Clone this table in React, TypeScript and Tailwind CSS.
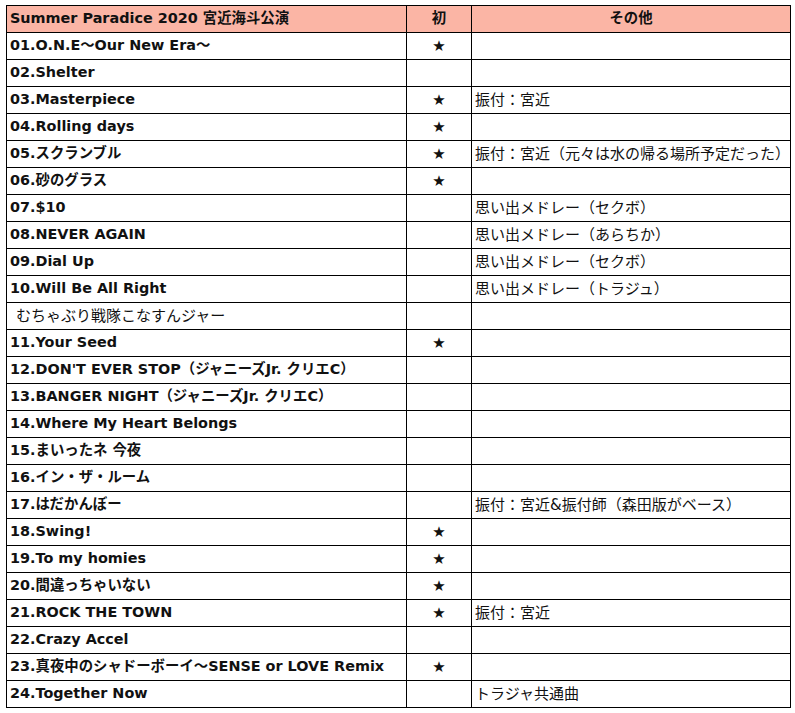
const rows: [string, boolean, string, boolean?][] = [
  ["01.O.N.E〜Our New Era〜", true, ""],
  ["02.Shelter", false, ""],
  ["03.Masterpiece", true, "振付：宮近"],
  ["04.Rolling days", true, ""],
  ["05.スクランブル", true, "振付：宮近（元々は水の帰る場所予定だった）"],
  ["06.砂のグラス", true, ""],
  ["07.$10", false, "思い出メドレー（セクボ）"],
  ["08.NEVER AGAIN", false, "思い出メドレー（あらちか）"],
  ["09.Dial Up", false, "思い出メドレー（セクボ）"],
  ["10.Will Be All Right", false, "思い出メドレー（トラジュ）"],
  ["むちゃぶり戦隊こなすんジャー", false, "", true],
  ["11.Your Seed", true, ""],
  ["12.DON'T EVER STOP（ジャニーズJr. クリエC）", false, ""],
  ["13.BANGER NIGHT（ジャニーズJr. クリエC）", false, ""],
  ["14.Where My Heart Belongs", false, ""],
  ["15.まいったネ 今夜", false, ""],
  ["16.イン・ザ・ルーム", false, ""],
  ["17.はだかんぼー", false, "振付：宮近&振付師（森田版がベース）"],
  ["18.Swing!", true, ""],
  ["19.To my homies", true, ""],
  ["20.間違っちゃいない", true, ""],
  ["21.ROCK THE TOWN", true, "振付：宮近"],
  ["22.Crazy Accel", false, ""],
  ["23.真夜中のシャドーボーイ〜SENSE or LOVE Remix", true, ""],
  ["24.Together Now", false, "トラジャ共通曲"],
];

export default function App() {
  return (
    <div className="min-h-screen bg-white pt-[5px] pl-[6px] text-[#111] [font-family:'DejaVu_Sans','Noto_Sans_CJK_JP',sans-serif]">
      <table className="border-collapse table-fixed w-[784px]">
        <colgroup>
          <col className="w-[400px]" />
          <col className="w-[65px]" />
          <col className="w-[319px]" />
        </colgroup>
        <thead>
          <tr className="h-[27px] bg-[#fbb5a5] text-[14.4px] font-bold">
            <th className="border border-black px-[3px] text-left">Summer Paradice 2020 宮近海斗公演</th>
            <th className="border border-black">初</th>
            <th className="border border-black">その他</th>
          </tr>
        </thead>
        <tbody>
          {rows.map(([title, first, note, plain], idx) => (
            <tr key={idx} className="h-[27px]">
              <td
                className={
                  plain
                    ? "border border-black pl-[9px] text-[15px] font-normal whitespace-nowrap"
                    : "border border-black px-[3px] text-[14.4px] font-bold whitespace-nowrap"
                }
              >
                {title}
              </td>
              <td className="border border-black text-center text-[15px] leading-none">{first ? "★" : ""}</td>
              <td className="border border-black px-[3px] text-[15px] whitespace-nowrap">{note}</td>
            </tr>
          ))}
        </tbody>
      </table>
    </div>
  );
}
